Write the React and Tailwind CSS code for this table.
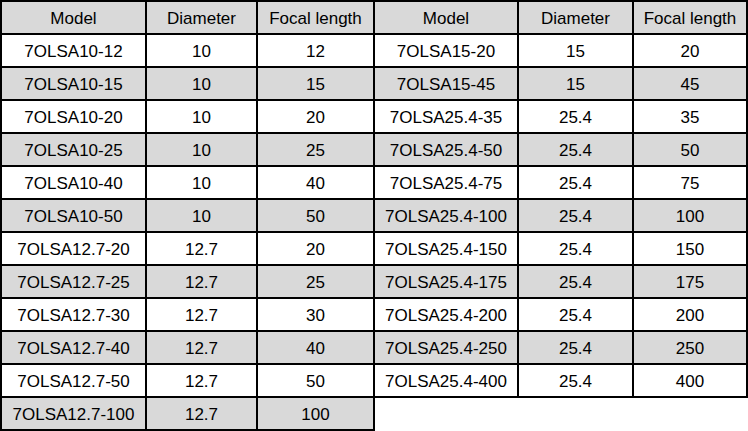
// ── Lens table: two bordered grids side by side ───────────────────
const HEAD = ["Model", "Diameter", "Focal length"];

const LEFT = [
  ["7OLSA10-12", "10", "12"],
  ["7OLSA10-15", "10", "15"],
  ["7OLSA10-20", "10", "20"],
  ["7OLSA10-25", "10", "25"],
  ["7OLSA10-40", "10", "40"],
  ["7OLSA10-50", "10", "50"],
  ["7OLSA12.7-20", "12.7", "20"],
  ["7OLSA12.7-25", "12.7", "25"],
  ["7OLSA12.7-30", "12.7", "30"],
  ["7OLSA12.7-40", "12.7", "40"],
  ["7OLSA12.7-50", "12.7", "50"],
  ["7OLSA12.7-100", "12.7", "100"],
];

const RIGHT = [
  ["7OLSA15-20", "15", "20"],
  ["7OLSA15-45", "15", "45"],
  ["7OLSA25.4-35", "25.4", "35"],
  ["7OLSA25.4-50", "25.4", "50"],
  ["7OLSA25.4-75", "25.4", "75"],
  ["7OLSA25.4-100", "25.4", "100"],
  ["7OLSA25.4-150", "25.4", "150"],
  ["7OLSA25.4-175", "25.4", "175"],
  ["7OLSA25.4-200", "25.4", "200"],
  ["7OLSA25.4-250", "25.4", "250"],
  ["7OLSA25.4-400", "25.4", "400"],
];

const Cell = ({ children, gray }) => (
  <div className={`h-[31px] pt-[2px] flex items-center justify-center whitespace-nowrap ${gray ? "bg-[#d9d9d9]" : "bg-white"}`}>
    {children}
  </div>
);

const Block = ({ rows, cols, className }) => (
  <div className={`grid gap-[2px] bg-black ${cols} ${className}`}>
    {HEAD.map(h => <Cell key={h} gray>{h}</Cell>)}
    {rows.map((r, i) =>
      r.map((v, j) => <Cell key={`${i}-${j}`} gray={i % 2 === 1}>{v}</Cell>)
    )}
  </div>
);

export default function App() {
  return (
    <div className="w-[748px] h-[431px] bg-white flex items-start text-[17px] text-black" style={{ fontFamily: '"Liberation Sans", Arial, sans-serif' }}>
      <Block rows={LEFT} cols="grid-cols-[143px_109px_115px]" className="p-[2px] w-[375px]" />
      <Block rows={RIGHT} cols="grid-cols-[142px_113px_112px]" className="pt-[2px] pr-[2px] pb-[2px] w-[373px]" />
    </div>
  );
}
